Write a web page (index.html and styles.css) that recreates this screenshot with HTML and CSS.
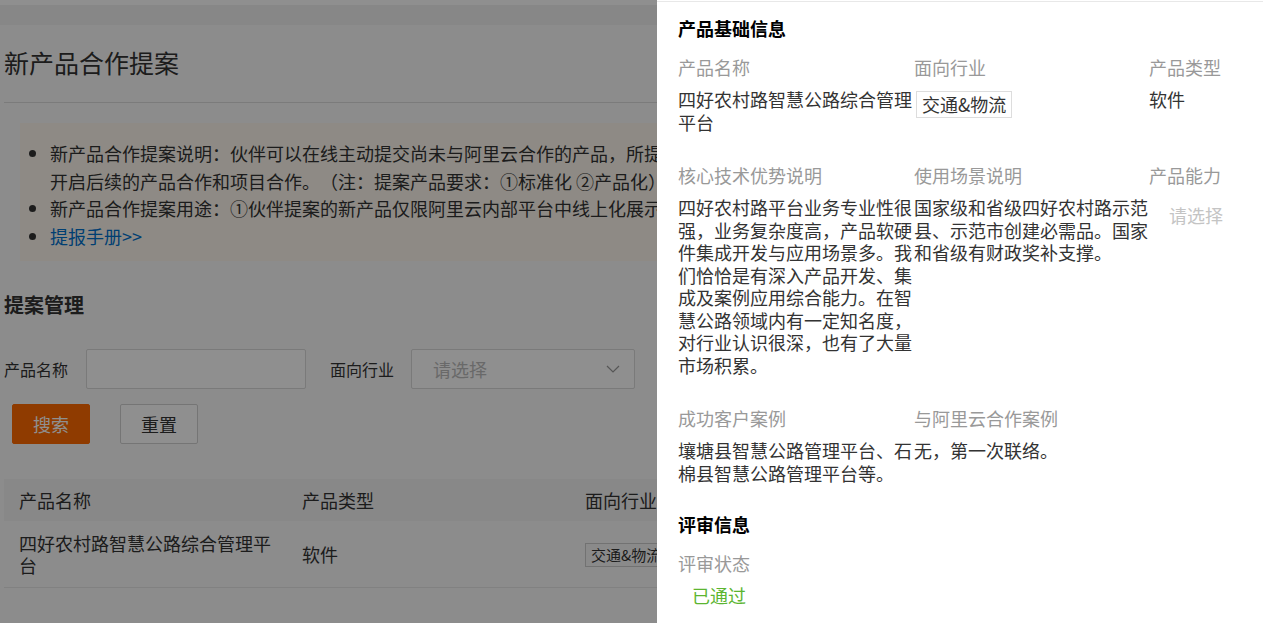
FILE: index.html
```html
<!DOCTYPE html>
<html lang="zh-CN">
<head>
    <meta charset="UTF-8">
    <meta name="viewport" content="width=device-width, initial-scale=1.0">
    <title>新产品合作提案</title>
    <link rel="stylesheet" href="styles.css">
</head>
<body>
    <div class="page">
        <div class="topbar"></div>
        <div class="content">
            <h1 class="page-title">新产品合作提案</h1>

            <div class="notice">
                <ul>
                    <li>新产品合作提案说明：伙伴可以在线主动提交尚未与阿里云合作的产品，所提交的产品经阿里云评估通过后，双方可<br>开启后续的产品合作和项目合作。（注：提案产品要求：①标准化 ②产品化）</li>
                    <li>新产品合作提案用途：①伙伴提案的新产品仅限阿里云内部平台中线上化展示，供阿里云内部人员查看。</li>
                    <li><a href="#">提报手册&gt;&gt;</a></li>
                </ul>
            </div>

            <h2 class="block-title">提案管理</h2>

            <div class="filter">
                <label class="filter-label" for="name">产品名称</label>
                <input class="filter-input" type="text" id="name">
                <label class="filter-label filter-label-gap">面向行业</label>
                <div class="select">
                    <span>请选择</span>
                    <svg width="14" height="8" viewBox="0 0 14 8"><path d="M1 1l6 6 6-6" fill="none" stroke="#999" stroke-width="1.2"/></svg>
                </div>
            </div>
            <div class="actions">
                <button class="btn btn-primary">搜索</button>
                <button class="btn">重置</button>
            </div>

            <table class="list">
                <colgroup>
                    <col class="col"><col class="col"><col class="col"><col class="col">
                </colgroup>
                <tr>
                    <th>产品名称</th>
                    <th>产品类型</th>
                    <th>面向行业</th>
                    <th>操作</th>
                </tr>
                <tr>
                    <td>四好农村路智慧公路综合管理平台</td>
                    <td>软件</td>
                    <td><span class="mini-tag">交通&amp;物流</span></td>
                    <td>查看</td>
                </tr>
            </table>
        </div>
    </div>

    <div class="mask"></div>

    <aside class="drawer">
        <div class="drawer-body">
            <section class="info">
                <h3 class="info-title">产品基础信息</h3>
                <div class="fields">
                    <div class="field">
                        <div class="field-label">产品名称</div>
                        <div class="field-value">四好农村路智慧公路综合管理平台</div>
                    </div>
                    <div class="field">
                        <div class="field-label">面向行业</div>
                        <div class="field-value tags"><span class="tag">交通&amp;物流</span></div>
                    </div>
                    <div class="field">
                        <div class="field-label">产品类型</div>
                        <div class="field-value">软件</div>
                    </div>

                    <div class="field">
                        <div class="field-label">核心技术优势说明</div>
                        <div class="field-value">四好农村路平台业务专业性很强，业务复杂度高，产品软硬件集成开发与应用场景多。我们恰恰是有深入产品开发、集成及案例应用综合能力。在智慧公路领域内有一定知名度，对行业认识很深，也有了大量市场积累。</div>
                    </div>
                    <div class="field">
                        <div class="field-label">使用场景说明</div>
                        <div class="field-value">国家级和省级四好农村路示范县、示范市创建必需品。国家和省级有财政奖补支撑。</div>
                    </div>
                    <div class="field">
                        <div class="field-label">产品能力</div>
                        <div class="field-value placeholder">请选择</div>
                    </div>

                    <div class="field">
                        <div class="field-label">成功客户案例</div>
                        <div class="field-value">壤塘县智慧公路管理平台、石棉县智慧公路管理平台等。</div>
                    </div>
                    <div class="field">
                        <div class="field-label">与阿里云合作案例</div>
                        <div class="field-value">无，第一次联络。</div>
                    </div>
                </div>
            </section>

            <section class="info">
                <h3 class="info-title">评审信息</h3>
                <div class="fields">
                    <div class="field">
                        <div class="field-label">评审状态</div>
                        <div class="field-value status-pass">已通过</div>
                    </div>
                </div>
            </section>
        </div>
    </aside>
</body>
</html>
```

FILE: styles.css
```css
body {
    margin: 0;
    background-color: #fff;
    font-family: "Noto Sans CJK SC", "Microsoft YaHei", sans-serif;
    color: #333;
    text-spacing-trim: space-all;
}

/* 背景页面 */
.topbar {
    height: 20px;
    margin-top: 5px;
    background-color: #f0f0f0;
}

.content {
    background-color: #fafafa;
    padding: 0 4px 40px;
    min-height: 560px;
}

.page-title {
    margin: 0;
    padding: 20px 0 23px;
    font-size: 25px;
    line-height: 34px;
    font-weight: normal;
    border-bottom: 1px solid #dcdcdc;
}

.notice {
    margin: 20px 12px 0 16px;
    background-color: #fdf7ee;
}

.notice ul {
    margin: 0;
    padding: 17px 0 11px 30px;
    font-size: 18px;
    line-height: 27.5px;
}

.notice a {
    color: #0070cc;
    text-decoration: none;
}

.block-title {
    margin: 30px 0 0;
    font-size: 20px;
    line-height: 28px;
    font-weight: bold;
}

.filter {
    display: flex;
    align-items: center;
    height: 40px;
    margin-top: 30px;
}

.filter-label {
    font-size: 16px;
    margin-right: 18px;
}

.filter-label-gap {
    margin-left: 24px;
    margin-right: 17px;
}

.filter-input {
    width: 220px;
    height: 40px;
    box-sizing: border-box;
    border: 1px solid #d9d9d9;
    border-radius: 2px;
    background-color: #fff;
}

.select {
    width: 224px;
    height: 40px;
    box-sizing: border-box;
    display: flex;
    align-items: center;
    justify-content: space-between;
    padding: 0 14px 0 21px;
    border: 1px solid #d9d9d9;
    border-radius: 2px;
    background-color: #fff;
    color: #bbb;
    font-size: 18px;
}

.actions {
    display: flex;
    gap: 30px;
    margin: 15px 0 0 8px;
}

.btn {
    width: 78px;
    height: 40px;
    padding: 0;
    font-family: inherit;
    font-size: 18px;
    color: #333;
    background-color: #fff;
    border: 1px solid #d0d0d0;
    border-radius: 2px;
}

.btn-primary {
    background-color: #ff6a00;
    border-color: #ff6a00;
    color: #fff;
}

.list {
    margin-top: 35px;
    width: 1132px;
    table-layout: fixed;
    border-collapse: collapse;
    font-size: 18px;
}

.list .col {
    width: 283px;
}

.list th {
    height: 42px;
    padding: 0 15px;
    text-align: left;
    font-weight: normal;
    background-color: #f2f2f2;
}

.list td {
    padding: 11px 15px;
    line-height: 22px;
    border-bottom: 1px solid #e6e6e6;
}

.mini-tag {
    display: inline-block;
    font-size: 15px;
    line-height: 22px;
    padding: 0 5px;
    border: 1px solid #ccc;
    background-color: #f7f7f7;
}

/* 遮罩和抽屉 */
.mask {
    position: fixed;
    top: 0;
    right: 0;
    bottom: 0;
    left: 0;
    background-color: rgba(0, 0, 0, 0.44);
}

.drawer {
    position: fixed;
    top: 0;
    right: 0;
    bottom: 0;
    width: 606px;
    background-color: #fff;
    overflow: hidden;
}

.drawer-body {
    margin-top: 1px;
    border-top: 1px solid #e8e8e8;
    padding: 0 20px 0 21px;
}

.info + .info {
    padding-top: 14px;
}

.info-title {
    margin: 14px 0 0;
    font-size: 18px;
    line-height: 24px;
    font-weight: bold;
    color: #000;
}

.fields {
    display: grid;
    grid-template-columns: 236px 235px 1fr;
    row-gap: 31px;
    margin-top: 16px;
}

.field-label {
    font-size: 18px;
    line-height: 22px;
    color: #999;
    margin-bottom: 10px;
}

.field-value {
    font-size: 18px;
    line-height: 22.5px;
    color: #333;
}

.tags {
    display: flex;
    align-items: flex-start;
}

.tag {
    margin: 3px 0 0 2px;
    padding: 0 5px;
    line-height: 25px;
    border: 1px solid #ddd;
}

.placeholder {
    padding: 8px 0 0 20px;
    color: #c4c4c4;
}

.status-pass {
    margin-top: 9px;
    padding-left: 14px;
    color: #5cb531;
}
```
